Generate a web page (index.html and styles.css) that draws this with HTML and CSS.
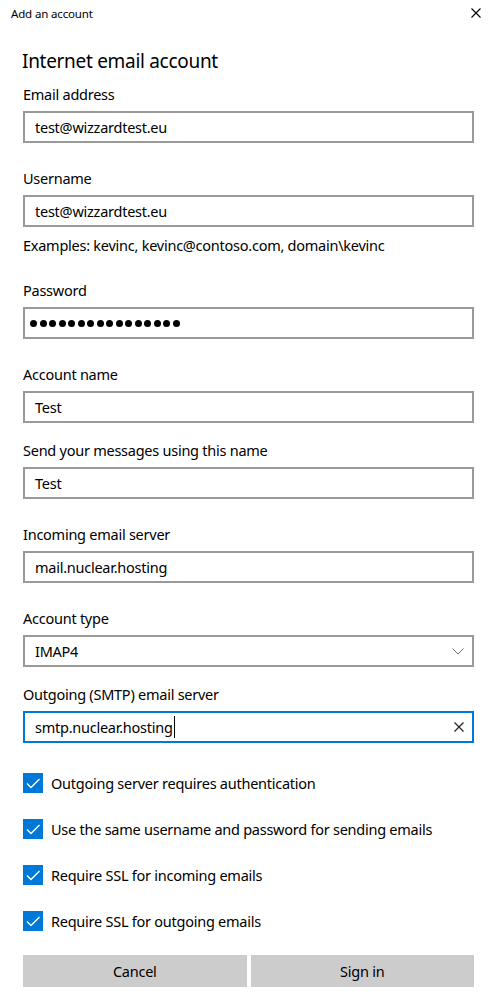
FILE: index.html
```html
<!DOCTYPE html>
<html lang="en">
<head>
<meta charset="utf-8">
<title>Add an account</title>
<link rel="stylesheet" href="styles.css">
</head>
<body>
<div class="titlebar">
  <span class="titlebar-text">Add an account</span>
  <svg class="close" width="10" height="10" viewBox="0 0 10 10"><path d="M0.5 0.5 L9.5 9.5 M9.5 0.5 L0.5 9.5" stroke="#000" stroke-width="1.1" fill="none"/></svg>
</div>
<main class="content">
  <h1 class="title">Internet email account</h1>

  <div class="field">
    <div class="label">Email address</div>
    <div class="box">test@wizzardtest.eu</div>
  </div>

  <div class="field">
    <div class="label">Username</div>
    <div class="box">test@wizzardtest.eu</div>
    <div class="hint">Examples: kevinc, kevinc@contoso.com, domain\kevinc</div>
  </div>

  <div class="field">
    <div class="label">Password</div>
    <div class="box box-pw">
      <span class="dots"><i></i><i></i><i></i><i></i><i></i><i></i><i></i><i></i><i></i><i></i><i></i><i></i><i></i><i></i><i></i><i></i></span>
    </div>
  </div>

  <div class="field tight">
    <div class="label">Account name</div>
    <div class="box">Test</div>
  </div>

  <div class="field">
    <div class="label">Send your messages using this name</div>
    <div class="box">Test</div>
  </div>

  <div class="field">
    <div class="label">Incoming email server</div>
    <div class="box">mail.nuclear.hosting</div>
  </div>

  <div class="field tight">
    <div class="label">Account type</div>
    <div class="box box-select">
      <span>IMAP4</span>
      <svg class="chev" width="12" height="7" viewBox="0 0 12 7"><path d="M0.5 0.5 L6 6 L11.5 0.5" stroke="#707070" stroke-width="1" fill="none"/></svg>
    </div>
  </div>

  <div class="field last">
    <div class="label">Outgoing (SMTP) email server</div>
    <div class="box box-focus">
      <span class="val">smtp.nuclear.hosting<span class="caret"></span></span>
      <svg class="clear" width="10" height="10" viewBox="0 0 10 10"><path d="M0.5 0.5 L9.5 9.5 M9.5 0.5 L0.5 9.5" stroke="#222" stroke-width="1.2" fill="none"/></svg>
    </div>
  </div>

  <div class="checks">
    <div class="check"><span class="cb"><svg width="20" height="20" viewBox="0 0 20 20"><path d="M4 10.5 L8 14.5 L16.5 6" stroke="#fff" stroke-width="1.4" fill="none"/></svg></span><span>Outgoing server requires authentication</span></div>
    <div class="check"><span class="cb"><svg width="20" height="20" viewBox="0 0 20 20"><path d="M4 10.5 L8 14.5 L16.5 6" stroke="#fff" stroke-width="1.4" fill="none"/></svg></span><span>Use the same username and password for sending emails</span></div>
    <div class="check"><span class="cb"><svg width="20" height="20" viewBox="0 0 20 20"><path d="M4 10.5 L8 14.5 L16.5 6" stroke="#fff" stroke-width="1.4" fill="none"/></svg></span><span>Require SSL for incoming emails</span></div>
    <div class="check"><span class="cb"><svg width="20" height="20" viewBox="0 0 20 20"><path d="M4 10.5 L8 14.5 L16.5 6" stroke="#fff" stroke-width="1.4" fill="none"/></svg></span><span>Require SSL for outgoing emails</span></div>
  </div>

  <div class="buttons">
    <button class="btn">Cancel</button>
    <button class="btn">Sign in</button>
  </div>
</main>
</body>
</html>
```
FILE: styles.css
```css
* { box-sizing: border-box; }
html, body {
  margin: 0;
  background: #fff;
  color: #000;
  font-family: "Noto Sans", "Open Sans", sans-serif;
}
.titlebar {
  height: 26px;
  display: flex;
  align-items: center;
  justify-content: space-between;
  padding: 0 13px 0 11px;
  font-size: 11.5px;
  letter-spacing: -0.15px;
}
.close { display: block; }
.content {
  padding: 0 20px 0 23px;
  font-size: 14.5px;
  letter-spacing: -0.25px;
}
.title {
  font-size: 19px;
  font-weight: 400;
  line-height: 28px;
  letter-spacing: -0.3px;
  margin: 21px 0 9px -1px;
}
.field { margin-bottom: 25px; }
.field.tight { margin-bottom: 17px; }
.field.last { margin-bottom: 30px; }
.label {
  line-height: 20px;
  margin-bottom: 7px;
}
.box {
  height: 32px;
  border: 2px solid #999;
  padding: 0 10px;
  display: flex;
  align-items: center;
  white-space: nowrap;
}
.hint {
  line-height: 20px;
  margin-top: 8px;
}
.box-pw { padding-left: 5px; }
.dots { display: flex; gap: 2.5px; }
.dots i {
  display: block;
  width: 7px;
  height: 7px;
  border-radius: 50%;
  background: #000;
}
.box-select, .box-focus { justify-content: space-between; }
.box-select { padding-right: 8px; }
.box-focus { border-color: #0078d7; padding-right: 8px; }
.chev, .clear { display: block; }
.val { display: flex; align-items: center; }
.caret {
  display: inline-block;
  width: 1px;
  height: 22px;
  background: #000;
  margin-left: 1px;
}
.checks {
  display: flex;
  flex-direction: column;
  gap: 26px;
}
.check {
  display: flex;
  align-items: center;
  gap: 8px;
  height: 20px;
}
.cb {
  width: 20px;
  height: 20px;
  background: #0078d7;
  display: block;
  flex: none;
}
.cb svg { display: block; }
.buttons {
  display: grid;
  grid-template-columns: 1fr 1fr;
  gap: 4px;
  margin-top: 24px;
}
.btn {
  height: 32px;
  border: none;
  background: #ccc;
  color: #000;
  font-family: inherit;
  font-size: 14.5px;
  letter-spacing: -0.25px;
  padding: 0;
}
```
